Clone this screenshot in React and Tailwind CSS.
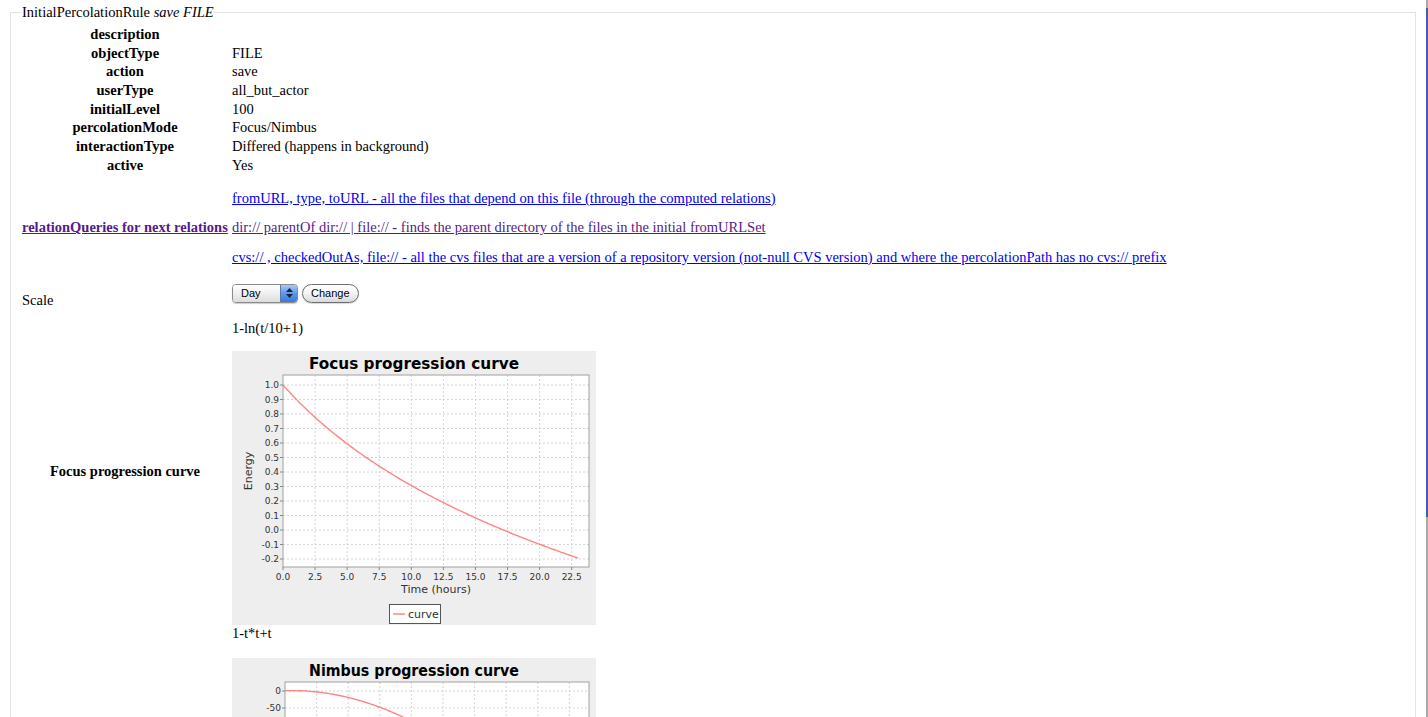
import React from 'react';

const fields = [
  ['description', ''],
  ['objectType', 'FILE'],
  ['action', 'save'],
  ['userType', 'all_but_actor'],
  ['initialLevel', '100'],
  ['percolationMode', 'Focus/Nimbus'],
  ['interactionType', 'Differed (happens in background)'],
  ['active', 'Yes'],
];

const xTicks = [0, 2.5, 5, 7.5, 10, 12.5, 15, 17.5, 20, 22.5];

const Chart = ({ title, plotLeft, xScale, yOf, yTicks, fn }) => {
  const plotTop = 24;
  const plotRight = 357;
  const plotBottom = 216;
  const xOf = (t) => plotLeft + t * xScale;
  const points = [];
  for (let i = 0; i <= 230; i++) {
    const t = i / 10;
    points.push(`${xOf(t).toFixed(2)},${yOf(fn(t)).toFixed(2)}`);
  }
  const font = 'DejaVu Sans, Liberation Sans, sans-serif';

  return (
    <svg width="364" height="274" viewBox="0 0 364 274" className="block">
      <defs>
        <clipPath id={`clip-${title}`}>
          <rect x={plotLeft} y={plotTop} width={plotRight - plotLeft} height={plotBottom - plotTop} />
        </clipPath>
      </defs>
      <rect x="0" y="0" width="364" height="274" fill="#eeeeee" />
      <text x="182" y="18" textAnchor="middle" fontFamily={font} fontWeight="bold" fontSize="15" textLength="210" lengthAdjust="spacingAndGlyphs" fill="#000">
        {title}
      </text>
      <rect x={plotLeft} y={plotTop} width={plotRight - plotLeft} height={plotBottom - plotTop} fill="#fff" />

      {/* grid */}
      {xTicks.slice(1).map((t) => (
        <line key={`gx${t}`} x1={xOf(t)} x2={xOf(t)} y1={plotTop} y2={plotBottom} stroke="#d4d4d4" strokeWidth="1" strokeDasharray="2 2" />
      ))}
      {yTicks.map(([v]) => (
        <line key={`gy${v}`} x1={plotLeft} x2={plotRight} y1={yOf(v)} y2={yOf(v)} stroke="#d4d4d4" strokeWidth="1" strokeDasharray="2 2" />
      ))}

      <polyline points={points.join(' ')} fill="none" stroke="#ff8585" strokeWidth="1.4" clipPath={`url(#clip-${title})`} />

      <rect x={plotLeft} y={plotTop} width={plotRight - plotLeft} height={plotBottom - plotTop} fill="none" stroke="#a0a0a0" strokeWidth="1" />

      {/* y axis */}
      {yTicks.map(([v, label]) => (
        <g key={`ty${v}`}>
          <line x1={plotLeft - 3} x2={plotLeft} y1={yOf(v)} y2={yOf(v)} stroke="#888" />
          <text x={plotLeft - 4} y={yOf(v) + 3} textAnchor="end" fontFamily={font} fontSize="9" fill="#333">
            {label}
          </text>
        </g>
      ))}
      <text transform={`translate(20 ${(plotTop + plotBottom) / 2}) rotate(-90)`} textAnchor="middle" fontFamily={font} fontSize="11" fill="#333">
        Energy
      </text>

      {/* x axis */}
      {xTicks.map((t) => (
        <g key={`tx${t}`}>
          <line x1={xOf(t)} x2={xOf(t)} y1={plotBottom} y2={plotBottom + 3} stroke="#888" />
          <text x={xOf(t)} y={plotBottom + 13} textAnchor="middle" fontFamily={font} fontSize="9" fill="#333">
            {t.toFixed(1)}
          </text>
        </g>
      ))}
      <text x={(plotLeft + plotRight) / 2} y="242" textAnchor="middle" fontFamily={font} fontSize="11" fill="#333">
        Time (hours)
      </text>

      {/* legend */}
      <rect x="157.5" y="253.5" width="51" height="19" fill="#fff" stroke="#555" />
      <line x1="161" x2="173" y1="263" y2="263" stroke="#ff8585" strokeWidth="1.5" />
      <text x="176" y="267" fontFamily={font} fontSize="11" fill="#333">
        curve
      </text>
    </svg>
  );
};

const focusTicks = [1.0, 0.9, 0.8, 0.7, 0.6, 0.5, 0.4, 0.3, 0.2, 0.1, 0, -0.1, -0.2].map((v) => [v, v.toFixed(1)]);
const nimbusTicks = [0, -50, -100, -150, -200, -250, -300, -350, -400, -450, -500].map((v) => [v, String(v)]);

const link = 'text-[#0000ee] underline';
const visited = 'text-[#551a8b] underline';

export default function App() {
  return (
    <div className="flex h-[717px] w-full overflow-hidden bg-white text-[14.5px] leading-[16px] text-black font-['Liberation_Serif',serif]">
      <div className="flex-1 min-w-0 pt-[4px] px-[8px]">
        <fieldset className="mx-[2px] border border-[#e3e3e3] px-[11px] pb-4">
          <legend className="leading-[16px]">
            InitialPercolationRule <i>save FILE</i>
          </legend>

          <div className="mt-[4.6px] grid grid-cols-[206px_1fr] gap-x-[4px]">
            {fields.map(([k, v]) => (
              <React.Fragment key={k}>
                <div className="h-[18.7px] flex items-center justify-center font-bold">{k}</div>
                <div className="h-[18.7px] flex items-center">{v}</div>
              </React.Fragment>
            ))}
          </div>

          <div className="mt-[9px] grid grid-cols-[206px_1fr] gap-x-[4px]">
            <div className="h-[29.5px]" />
            <div className="h-[29.5px] flex items-center">
              <a href="#" className={link}>fromURL, type, toURL - all the files that depend on this file (through the computed relations)</a>
            </div>
            <div className="h-[29.5px] flex items-center">
              <a href="#" className={`${visited} font-bold`}>relationQueries for next relations</a>
            </div>
            <div className="h-[29.5px] flex items-center">
              <a href="#" className={visited}>dir:// parentOf dir:// | file:// - finds the parent directory of the files in the initial fromURLSet</a>
            </div>
            <div className="h-[29.5px]" />
            <div className="h-[29.5px] flex items-center">
              <a href="#" className={link}>cvs:// , checkedOutAs, file:// - all the cvs files that are a version of a repository version (not-null CVS version) and where the percolationPath has no cvs:// prefix</a>
            </div>

            {/* Scale */}
            <div className="h-[46px] pt-[20px]">Scale</div>
            <div className="h-[46px] pt-[12px] flex items-start gap-[4px] font-['Liberation_Sans',sans-serif] text-[11px]">
              <div className="flex h-[19px] w-[66px] overflow-hidden rounded-[4px] border border-[#8a8a8a] shadow-[0_1px_1px_rgba(0,0,0,0.2)]">
                <div className="flex-1 flex items-center pl-[8px] bg-gradient-to-b from-[#ffffff] via-[#f0f0f0] to-[#dcdcdc] text-black">Day</div>
                <div className="w-[17px] flex flex-col items-center justify-center gap-[2px] bg-gradient-to-b from-[#a9c8f5] via-[#5f97e6] to-[#3b78d8] border-l border-[#5a78a8]">
                  <svg width="7" height="4" viewBox="0 0 7 4"><path d="M3.5 0L7 4H0z" fill="#15254a" /></svg>
                  <svg width="7" height="4" viewBox="0 0 7 4"><path d="M0 0h7L3.5 4z" fill="#15254a" /></svg>
                </div>
              </div>
              <div className="flex h-[19px] items-center rounded-full border border-[#6e6e6e] bg-gradient-to-b from-[#ffffff] via-[#f4f4f4] to-[#d8d8d8] px-[8px] text-black shadow-[0_1px_1px_rgba(0,0,0,0.15)]">
                Change
              </div>
            </div>

            {/* Focus */}
            <div className="self-center text-center font-bold">Focus progression curve</div>
            <div>
              <div className="h-[20px] flex items-center">1-ln(t/10+1)</div>
              <div className="mt-[13px]">
                <Chart
                  title="Focus progression curve"
                  plotLeft={51}
                  xScale={12.83}
                  yOf={(v) => 34 + (1 - v) * 145}
                  yTicks={focusTicks}
                  fn={(t) => 1 - Math.log(t / 10 + 1)}
                />
              </div>
            </div>

            {/* Nimbus */}
            <div className="self-center text-center font-bold">Nimbus progression curve</div>
            <div>
              <div className="h-[16px] flex items-center">1-t*t+t</div>
              <div className="mt-[17px]">
                <Chart
                  title="Nimbus progression curve"
                  plotLeft={53}
                  xScale={12.64}
                  yOf={(v) => 33 + -v * 0.34}
                  yTicks={nimbusTicks}
                  fn={(t) => 1 - t * t + t}
                />
              </div>
            </div>
          </div>
        </fieldset>
      </div>

      {/* window edge / scroller */}
      <div className="w-[2px] flex flex-col bg-[#a9a9a9]">
        <div className="h-[8px]" />
        <div className="h-[509px] bg-[#3c5db3]" />
      </div>
    </div>
  );
}
